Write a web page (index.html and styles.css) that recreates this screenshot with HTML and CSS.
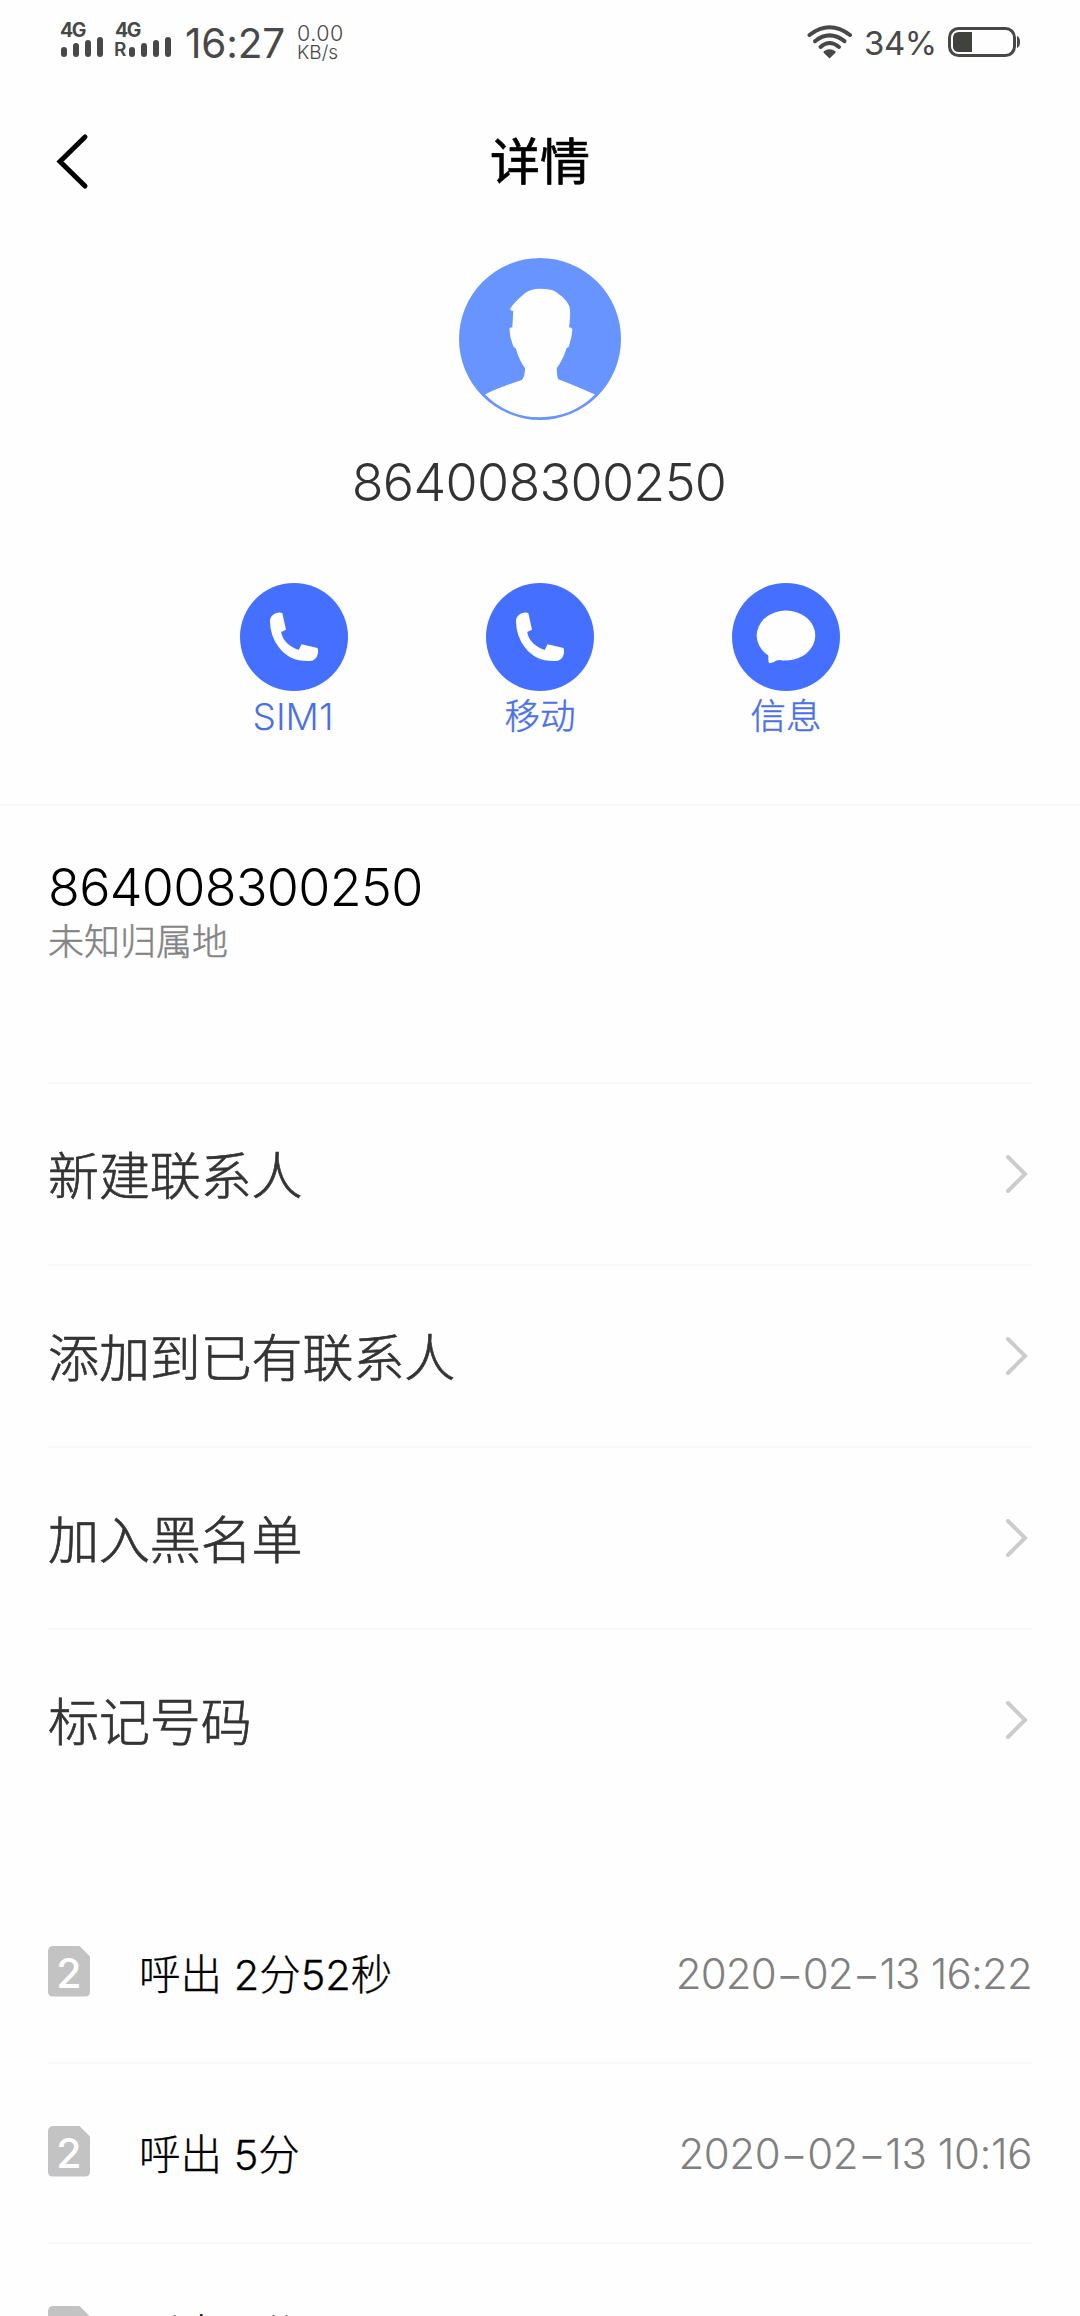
FILE: index.html
```html
<!DOCTYPE html>
<html lang="zh-CN">
<head>
<meta charset="utf-8">
<title>详情</title>
<link rel="stylesheet" href="styles.css">
</head>
<body>
<div class="screen">
  <div class="status">
    <div class="signal">
      <span class="net">4G</span>
      <div class="bars"><i class="b1"></i><i class="b2"></i><i class="b3"></i><i class="b4"></i></div>
    </div>
    <div class="signal second">
      <span class="net">4G</span>
      <div class="bars"><span class="roam">R</span><i class="b1"></i><i class="b2"></i><i class="b3"></i><i class="b4"></i></div>
    </div>
    <span class="time">16:27</span>
    <div class="speed"><span>0.00</span><span class="unit">KB/s</span></div>
    <svg class="wifi" width="46" height="34" viewBox="0 0 46 34">
      <g fill="none" stroke="#484848" stroke-width="4" stroke-linecap="round">
        <path d="M2.5 10Q22.5-5.5 43 10"/>
        <path d="M8 16.2Q22.5 4.5 37.5 16.2"/>
        <path d="M13.5 22Q22.5 14 32 22"/>
      </g>
      <path fill="#484848" d="M16.5 26.5Q22.5 22 28.7 26.5L28.5 27.8L22.5 33.5L16.7 27.8Z"/>
    </svg>
    <span class="percent">34%</span>
    <svg class="battery" width="74" height="32" viewBox="0 0 74 32">
      <rect x="1.5" y="1.5" width="65" height="27" rx="9" fill="none" stroke="#484848" stroke-width="3"/>
      <path fill="#40423c" d="M24 5H11Q5 5 5 11V19Q5 25 11 25H24Z"/>
      <path fill="#484848" d="M69 9Q72 10 72 15Q72 20 69 21Z"/>
    </svg>
  </div>
  <header class="header">
    <svg class="back" width="40" height="60" viewBox="0 0 40 60">
      <path d="M33 5L8 29.5L33 54" fill="none" stroke="#000" stroke-width="5" stroke-linecap="round"/>
    </svg>
    <h1>详情</h1>
  </header>
  <section class="profile">
    <svg class="avatar" width="162" height="162" viewBox="0 0 162 162">
      <circle cx="81" cy="81" r="81" fill="#6794ff"/>
      <path fill="#fefefe" d="M81 30.7Q92 30.7 97 34Q111 43.5 111 52Q111.500 61 110 69.300Q113 69.500 113.300 71Q113.500 76 110.300 87Q110 89.500 107.500 90.300Q104 102 97.700 110.300Q98 119.500 99.300 121.300Q112 126 136 136.500Q113.500 159.200 81 159.200Q48.500 159.200 26 136.500Q36 131 62.700 122Q66 119 66 110.300Q60 102 56.800 90.500Q54.300 89.600 53.700 86.500Q50.500 79 50.500 70.500Q50.500 69.500 53.300 69.300L54.300 53Q51.500 53 51 51.300Q54 45 66 35.300Q71.500 30.700 81 30.700Z"/>
    </svg>
    <div class="name">864008300250</div>
    <div class="actions">
      <div class="action">
        <svg width="108" height="108" viewBox="0 0 108 108"><circle cx="54" cy="54" r="54" fill="#4570ff"/><path class="glyph" d="M35 30.500Q39 29 42.300 30L46 46.700L41.200 49Q43 61 58.700 67L61.500 61.300L77.500 65Q78.500 67 78 70.500Q76 77.800 70 78Q50 79 39 64.500Q30 53 30 38Q30 33 35 30.500Z"/></svg>
        <span class="latin">SIM1</span>
      </div>
      <div class="action">
        <svg width="108" height="108" viewBox="0 0 108 108"><circle cx="54" cy="54" r="54" fill="#4570ff"/><path class="glyph" d="M35 30.500Q39 29 42.300 30L46 46.700L41.200 49Q43 61 58.700 67L61.500 61.300L77.500 65Q78.500 67 78 70.500Q76 77.800 70 78Q50 79 39 64.500Q30 53 30 38Q30 33 35 30.500Z"/></svg>
        <span>移动</span>
      </div>
      <div class="action">
        <svg width="108" height="108" viewBox="0 0 108 108"><circle cx="54" cy="54" r="54" fill="#4570ff"/><ellipse class="glyph" cx="54" cy="52.500" rx="29.300" ry="25"/><path class="glyph" d="M34 69Q37 72 36.300 74Q36 77.500 37 80.300Q42 79.500 44.500 77.500Q47 76.500 52 77.400L54 60Z"/></svg>
        <span>信息</span>
      </div>
    </div>
  </section>
  <section class="number">
    <div class="tel">864008300250</div>
    <div class="place">未知归属地</div>
  </section>
  <ul class="menu">
    <li><span>新建联系人</span><svg class="more" width="26" height="42" viewBox="0 0 26 42"><path d="M4 4L21 21L4 38"/></svg></li>
    <li><span>添加到已有联系人</span><svg class="more" width="26" height="42" viewBox="0 0 26 42"><path d="M4 4L21 21L4 38"/></svg></li>
    <li><span>加入黑名单</span><svg class="more" width="26" height="42" viewBox="0 0 26 42"><path d="M4 4L21 21L4 38"/></svg></li>
    <li><span>标记号码</span><svg class="more" width="26" height="42" viewBox="0 0 26 42"><path d="M4 4L21 21L4 38"/></svg></li>
  </ul>
  <ul class="calls">
    <li><b class="sim">2</b><span class="kind">呼出 2分52秒</span><time>2020−02−13 16:22</time></li>
    <li><b class="sim">2</b><span class="kind">呼出 5分</span><time class="wide">2020−02−13 10:16</time></li>
    <li><b class="sim">2</b><span class="kind">呼出 2分</span></li>
  </ul>
</div>
</body>
</html>
```
FILE: styles.css
```css
* { box-sizing: border-box; margin: 0; padding: 0; }
body {
  background: #fefefe;
  font-family: Inter, "Noto Sans CJK SC", sans-serif;
  font-weight: 300;
  overflow: hidden;
}
.screen { width: 1080px; height: 2316px; overflow: hidden; }
svg { display: block; flex: none; }
ul { list-style: none; }

.status { display: flex; height: 88px; color: #484848; padding-left: 60px; white-space: nowrap; }
.signal { width: 55px; padding-top: 20px; }
.signal.second { width: 70px; }
.net { display: block; font: 700 19.500px/20px Inter, sans-serif; letter-spacing: -1.4px; }
.bars { display: flex; align-items: flex-end; gap: 6px; height: 17px; padding-left: 1px; }
.bars i { width: 6px; border-radius: 3px; background: #484848; flex: none; }
.b1 { height: 10px; }
.b2 { height: 14px; }
.b3 { height: 17px; }
.b4 { height: 20px; }
.roam { font: 600 19px/14px Inter, sans-serif; width: 14px; flex: none; margin: 0 -5px 0 -2px; }
.time { font-size: 40.500px; line-height: 48px; padding-top: 20px; width: 112px; font-weight: 400; letter-spacing: -0.2px; }
.speed { width: 510px; padding-top: 22px; font-size: 21.500px; line-height: 23px; letter-spacing: 0.5px; font-weight: 350; }
.speed span { display: block; }
.speed .unit { font-size: 19px; line-height: 16px; letter-spacing: 0; }
.wifi { margin-top: 25px; }
.percent { width: 95px; padding-left: 11px; padding-top: 23px; font-size: 33px; line-height: 40px; font-weight: 400; letter-spacing: -0.5px; }
.battery { margin-top: 27px; }

.header { display: grid; grid-template-columns: 108px 1fr 108px; align-items: center; height: 148px; }
.back { margin-left: 52px; }
h1 { text-align: center; font-size: 50px; line-height: 60px; font-weight: 400; color: #000; -webkit-text-stroke: 0.7px; }

.profile { display: flex; flex-direction: column; align-items: center; height: 570px; padding-top: 22px; border-bottom: 2px solid #f8f8f8; }
.name { margin-top: 33px; padding-right: 2px; font-size: 52px; line-height: 60px; color: #333; letter-spacing: -0.650px; }
.actions { display: flex; gap: 138px; margin-top: 70px; }
.action { width: 108px; text-align: center; font-size: 35.500px; color: #4a70e8; }
.action span { display: block; line-height: 52px; -webkit-text-stroke: 0.5px; }
.action .latin { font-size: 37px; line-height: 51px; padding-right: 2px; -webkit-text-stroke: 0; }
.glyph { fill: #fefefe; }

.number { height: 278px; margin: 0 48px; padding-top: 52px; border-bottom: 2px solid #f8f8f8; }
.tel { font-size: 52px; line-height: 60px; color: #000; letter-spacing: -0.650px; }
.place { font-size: 36px; line-height: 48px; color: #848484; -webkit-text-stroke: 0.5px; }

.menu { margin: 0 48px; }
.menu li { display: flex; align-items: center; justify-content: space-between; height: 182px; padding-bottom: 1px; border-bottom: 2px solid #f8f8f8; font-size: 51px; color: #333; }
.menu li span { padding-bottom: 2px; letter-spacing: -0.1px; -webkit-text-stroke: 0.7px; }
.menu li:last-child { border-bottom-color: transparent; }
.more { margin-right: 2px; }
.more path { fill: none; stroke: #ccc; stroke-width: 4; stroke-linecap: round; }

.calls { margin: 72px 48px 0; }
.calls li { display: flex; align-items: center; height: 180px; border-bottom: 2px solid #f8f8f8; font-size: 42px; color: #000; white-space: nowrap; }
.kind { padding-bottom: 2px; font-size: 41.500px; -webkit-text-stroke: 0.3px; }
.sim {
  width: 42px; height: 51px; margin-right: 49px; margin-bottom: 4px;
  background: #c3c3c3; border-radius: 5px;
  clip-path: polygon(0 0, 31px 0, 100% 11px, 100% 100%, 0 100%);
  color: #fff; font-size: 41px; font-weight: 500; line-height: 54px; text-align: center;
}
time { margin-left: auto; padding-top: 1px; color: #808080; letter-spacing: -0.800px; }
time.wide { letter-spacing: -0.400px; }
```
